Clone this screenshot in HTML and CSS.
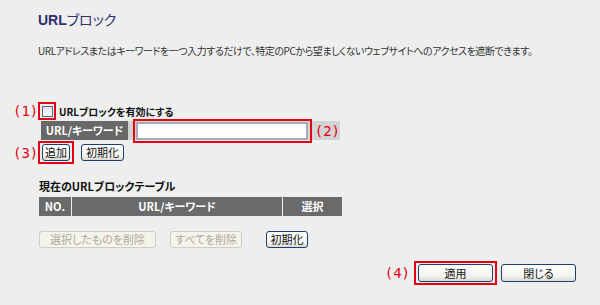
FILE: index.html
```
<!DOCTYPE html>
<html lang="ja">
  <head>
    <meta charset="utf-8" />
    <meta name="viewport" content="width=device-width, initial-scale=1" />
    <title>URLブロック</title>
    <link rel="stylesheet" href="styles.css">
  </head>

  <body>
    <main class="page">
      <h1 class="title"><b>URL</b>ブロック</h1>
      <p class="lead">URLアドレスまたはキーワードを一つ入力するだけで、特定のPCから望ましくないウェブサイトへのアクセスを遮断できます。</p>

      <div class="row enable-row">
        <span class="callout side">(1)</span>
        <span class="mark mark-check"><span class="check"></span></span>
        <label class="enable-label">URLブロックを有効にする</label>
      </div>

      <div class="keyword-row">
        <span class="kw-head">URL/キーワード</span>
        <span class="kw-band">
          <span class="mark mark-input"><input class="kw-input" autocomplete=off /></span>
          <span class="callout">(2)</span>
        </span>
      </div>

      <div class="row add-row">
        <span class="callout side">(3)</span>
        <span class="mark mark-btn"><button class="btn small">追加</button></span>
        <button class="btn reset">初期化</button>
      </div>

      <h2 class="table-title">現在のURLブロックテーブル</h2>
      <div class="table-head">
        <span class="col-no">NO.</span>
        <span class="col-url">URL/キーワード</span>
        <span class="col-sel">選択</span>
      </div>

      <div class="row table-actions">
        <button class="btn off wide">選択したものを削除</button>
        <button class="btn off mid">すべてを削除</button>
        <button class="btn reset">初期化</button>
      </div>

      <div class="footer">
        <span class="callout">(4)</span>
        <span class="mark mark-apply"><button class="btn big">適用</button></span>
        <button class="btn big">閉じる</button>
      </div>
    </main>
  </body>
</html>
```

FILE: styles.css
```
html, body {
    margin: 0;
    background: #eeeeee;
}
body {
    font-family: "Noto Sans CJK JP", "Liberation Sans", sans-serif;
    font-feature-settings: "palt";
    font-size: 11px;
    color: #222;
}
.page {
    width: 600px;
    height: 305px;
    padding: 10px 0 0 38px;
    box-sizing: border-box;
}
.title {
    margin: 0;
    height: 18px;
    line-height: 18px;
    font-size: 14px;
    font-weight: normal;
    color: #2e2f6d;
}
.title b {
    font-family: "Liberation Sans", sans-serif;
    font-weight: bold;
}
.lead {
    margin: 16px 0 0;
    height: 14px;
    line-height: 14px;
    font-size: 10px;
    letter-spacing: -0.45px;
    color: #333;
}
.row {
    display: flex;
    align-items: center;
}
.callout {
    color: #e60012;
    font-family: "DejaVu Sans Mono", monospace;
    font-size: 14px;
    line-height: 16px;
}
.callout.side {
    width: 25px;
    margin-left: -25px;
}
.mark {
    display: inline-flex;
    align-items: center;
    justify-content: center;
    border: 2px solid #e60012;
    box-sizing: border-box;
}
.enable-row {
    margin-top: 44px;
    height: 18px;
}
.mark-check {
    width: 18px;
    height: 18px;
}
.check {
    width: 11px;
    height: 11px;
    border: 1px solid #4b6a8c;
    background: linear-gradient(#dfe3e8, #fafafa);
    box-sizing: border-box;
}
.enable-label {
    margin-left: 3px;
    font-size: 10px;
    font-weight: bold;
    color: #111;
}
.keyword-row {
    display: flex;
    margin-top: 1px;
    margin-left: 3px;
    height: 19px;
    align-items: center;
}
.kw-head {
    width: 87px;
    height: 19px;
    line-height: 19px;
    background: #686868;
    color: #fff;
    font-weight: bold;
    text-align: center;
}
.kw-band {
    display: flex;
    align-items: center;
    width: 212px;
    height: 19px;
    background: #d3d3d3;
    padding-left: 5px;
    box-sizing: border-box;
}
.mark-input {
    width: 180px;
    height: 24px;
    padding: 1px;
}
.kw-input {
    width: 172px;
    height: 18px;
    border: 2px solid #a5acb5;
    box-sizing: border-box;
    background: #fff;
    padding: 0;
}
.kw-band .callout {
    margin-left: 3px;
}
.add-row {
    height: 23px;
    margin-top: 1px;
}
.mark-btn {
    width: 36px;
    height: 23px;
}
.add-row .reset {
    margin-left: 7px;
}
.btn {
    height: 17px;
    padding: 0;
    border: 1px solid #1c3f73;
    border-radius: 3px;
    background: linear-gradient(#ffffff, #f3f3ef 70%, #dcdbd3);
    font-family: inherit;
    font-feature-settings: "palt";
    font-size: 11px;
    line-height: 15px;
    color: #111;
}
.btn.small {
    width: 28px;
}
.btn.reset {
    width: 43px;
}
.btn.off {
    border-color: #cfcdc2;
    background: #f4f3ec;
    color: #ada99a;
}
.btn.wide {
    width: 117px;
}
.btn.mid {
    width: 72px;
}
.table-title {
    margin: 15px 0 0 1px;
    height: 14px;
    line-height: 14px;
    font-size: 11px;
    font-weight: bold;
    color: #111;
}
.table-head {
    display: flex;
    gap: 1px;
    margin: 4px 0 0 1px;
    width: 303px;
    height: 19px;
    line-height: 19px;
    color: #fff;
    font-weight: bold;
}
.table-head span {
    background: #6a6a6a;
    text-align: center;
}
.col-no {
    width: 32px;
}
.col-url {
    flex: 1;
}
.col-sel {
    width: 59px;
}
.table-actions {
    margin: 15px 0 0 1px;
    gap: 14px;
}
.table-actions .reset {
    width: 42px;
    margin-left: 10px;
}
.footer {
    display: flex;
    align-items: center;
    justify-content: flex-end;
    gap: 4px;
    margin-top: 13px;
    padding-right: 24px;
}
.mark-apply {
    width: 83px;
    height: 24px;
}
.btn.big {
    width: 75px;
    height: 18px;
}
```
